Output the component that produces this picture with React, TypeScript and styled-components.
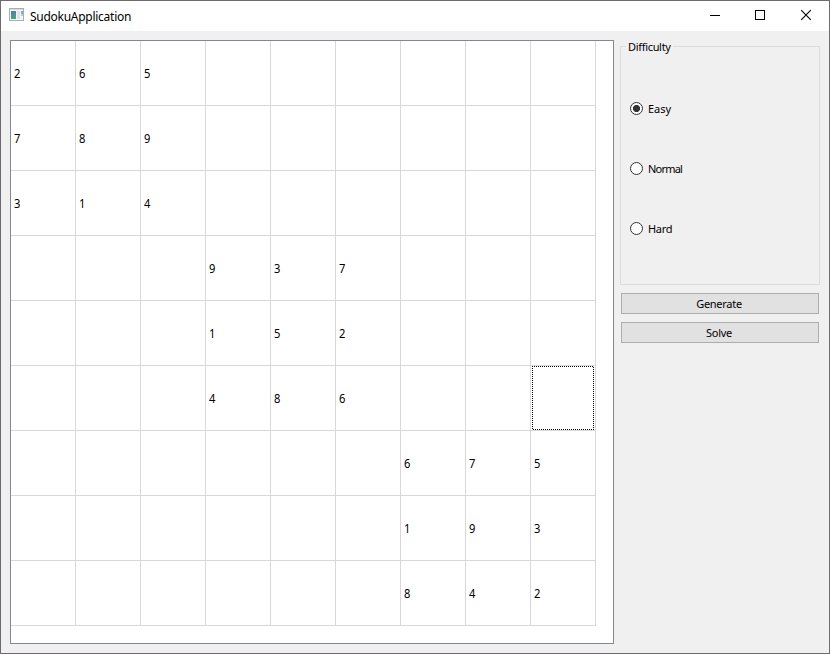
import React, { useState } from "react";
import styled, { createGlobalStyle } from "styled-components";

const GlobalStyle = createGlobalStyle`
  * { box-sizing: border-box; }
  body { margin: 0; background: #f0f0f0; overflow: hidden; }
`;

const Window = styled.div`
  width: 830px;
  height: 654px;
  display: flex;
  flex-direction: column;
  border: 1px solid #6d6b6d;
  background: #f0f0f0;
  color: #000;
  font: 12px/16px "Noto Sans", "Open Sans", sans-serif;
  cursor: default;
`;

const TitleBar = styled.header`
  height: 30px;
  flex: none;
  display: flex;
  align-items: center;
  padding-left: 8px;
  background: #fff;
`;

const AppIcon = styled.svg`
  width: 16px;
  height: 16px;
  flex: none;
  margin: 0 5px 2px 0;
`;

const Title = styled.span`
  flex: 1;
  padding-top: 1px;
  letter-spacing: -0.27px;
`;

const Controls = styled.div`
  display: flex;
  height: 100%;
  margin-right: 1px;
`;

const ControlButton = styled.button`
  display: flex;
  align-items: flex-start;
  width: 45px;
  height: 29px;
  padding: 8px 0 0 17px;
  border: 0;
  background: transparent;
`;

const Content = styled.main`
  flex: 1;
  display: flex;
  gap: 6px;
  padding: 9px;
`;

const BoardFrame = styled.div`
  width: 604px;
  height: 604px;
  flex: none;
  border: 1px solid #828790;
  background: #fff;
`;

const Board = styled.div`
  display: grid;
  grid-template-columns: repeat(9, 65px);
  grid-auto-rows: 65px;
`;

const Cell = styled.div<{ $focused: boolean }>`
  display: flex;
  align-items: center;
  padding: 1px 1px 0 ${(p) => (p.$focused ? 1 : 3)}px;
  ${(p) => p.$focused && "padding-top: 0;"}
  border-right: 1px solid #d8d8d8;
  border-bottom: 1px solid #d8d8d8;
`;

const Digit = styled.span`
  font-size: 12px;
  transform: scaleX(0.93);
  transform-origin: left;
`;

const FocusRect = styled.span`
  width: 62px;
  height: 64px;
  background:
    repeating-linear-gradient(90deg, #000 0 1px, #fff 1px 2px) top / 100% 1px no-repeat,
    repeating-linear-gradient(90deg, #fff 0 1px, #000 1px 2px) bottom / 100% 1px no-repeat,
    repeating-linear-gradient(180deg, #000 0 1px, #fff 1px 2px) left / 1px 100% no-repeat,
    repeating-linear-gradient(180deg, #fff 0 1px, #000 1px 2px) right / 1px 100% no-repeat;
`;

const Sidebar = styled.aside`
  width: 200px;
  display: flex;
  flex-direction: column;
  font-size: 11px;
`;

const Group = styled.fieldset`
  height: 247px;
  margin: -2px 0 8px;
  padding: 24px 9px 0;
  border: 1px solid #dcdcdc;
`;

const Legend = styled.legend`
  height: 16px;
  margin-left: -4px;
  padding: 1px 2px 0;
  letter-spacing: -0.32px;
`;

const Option = styled.label`
  display: flex;
  align-items: center;
  height: 60px;
`;

const OptionText = styled.span<{ $tracking: number }>`
  padding-top: 1px;
  letter-spacing: ${(p) => p.$tracking}px;
`;

const Radio = styled.input`
  appearance: none;
  flex: none;
  width: 13px;
  height: 13px;
  margin: 0 5px 0 0;
  border: 1px solid #333;
  border-radius: 50%;
  background: #fff;
  &:checked { background: radial-gradient(circle, #333 0 3.2px, #fff 3.9px); }
`;

const PushButton = styled.button`
  height: 21px;
  margin: 0 1px 8px;
  padding: 0 2px 0 0;
  border: 1px solid #adadad;
  background: #e1e1e1;
  color: #000;
  font: 11px/19px "Noto Sans", "Open Sans", sans-serif;
  letter-spacing: -0.28px;
`;

const rows = [
  "265      ",
  "789      ",
  "314      ",
  "   937   ",
  "   152   ",
  "   486   ",
  "      675",
  "      193",
  "      842",
];

const levels = [
  { name: "Easy", tracking: 0 },
  { name: "Normal", tracking: -0.8 },
  { name: "Hard", tracking: -0.3 },
];

export default function App() {
  const [level, setLevel] = useState("Easy");
  const [focus, setFocus] = useState(53);

  return (
    <>
      <GlobalStyle />
      <Window>
        <TitleBar>
          <AppIcon viewBox="0 0 16 16" shapeRendering="crispEdges">
            <defs>
              <linearGradient id="pane" x1="0" y1="0" x2="0.4" y2="1">
                <stop offset="0" stopColor="#477baf" />
                <stop offset="1" stopColor="#50a080" />
              </linearGradient>
            </defs>
            <path fill="#a8adb2" d="M0 1h15v13H0z" />
            <path fill="#d7dce0" d="M1 2h13v1H1z" />
            <path fill="#f5f5f5" d="M1 3h13v10H1z" />
            <path fill="url(#pane)" d="M2 4h5v8H2z" />
            <path fill="#dfe3e6" d="M8 4h3v8H8z" />
            <path fill="#86aacb" d="M12 4h2v3h-2z" />
            <path fill="#b7d4bd" d="M12 7h2v2h-2z" />
          </AppIcon>
          <Title>SudokuApplication</Title>
          <Controls>
            <ControlButton aria-label="Minimize">
              <svg width="11" height="11" shapeRendering="crispEdges"><path d="M0 6.5h10" stroke="#000" /></svg>
            </ControlButton>
            <ControlButton aria-label="Maximize">
              <svg width="11" height="11" shapeRendering="crispEdges"><path d="M.5 1.5h9v9h-9z" fill="none" stroke="#000" /></svg>
            </ControlButton>
            <ControlButton aria-label="Close">
              <svg width="12" height="12"><path d="M1.2 1.2l9.6 9.6M10.8 1.2L1.2 10.8" stroke="#000" strokeWidth="1.1" /></svg>
            </ControlButton>
          </Controls>
        </TitleBar>
        <Content>
          <BoardFrame>
            <Board>
              {rows.join("").split("").map((value, i) => (
                <Cell key={i} $focused={i === focus} onClick={() => setFocus(i)}>
                  {i === focus ? <FocusRect /> : <Digit>{value.trim()}</Digit>}
                </Cell>
              ))}
            </Board>
          </BoardFrame>
          <Sidebar>
            <Group>
              <Legend>Difficulty</Legend>
              {levels.map(({ name, tracking }) => (
                <Option key={name}>
                  <Radio type="radio" name="level" checked={level === name} onChange={() => setLevel(name)} />
                  <OptionText $tracking={tracking}>{name}</OptionText>
                </Option>
              ))}
            </Group>
            <PushButton>Generate</PushButton>
            <PushButton>Solve</PushButton>
          </Sidebar>
        </Content>
      </Window>
    </>
  );
}
